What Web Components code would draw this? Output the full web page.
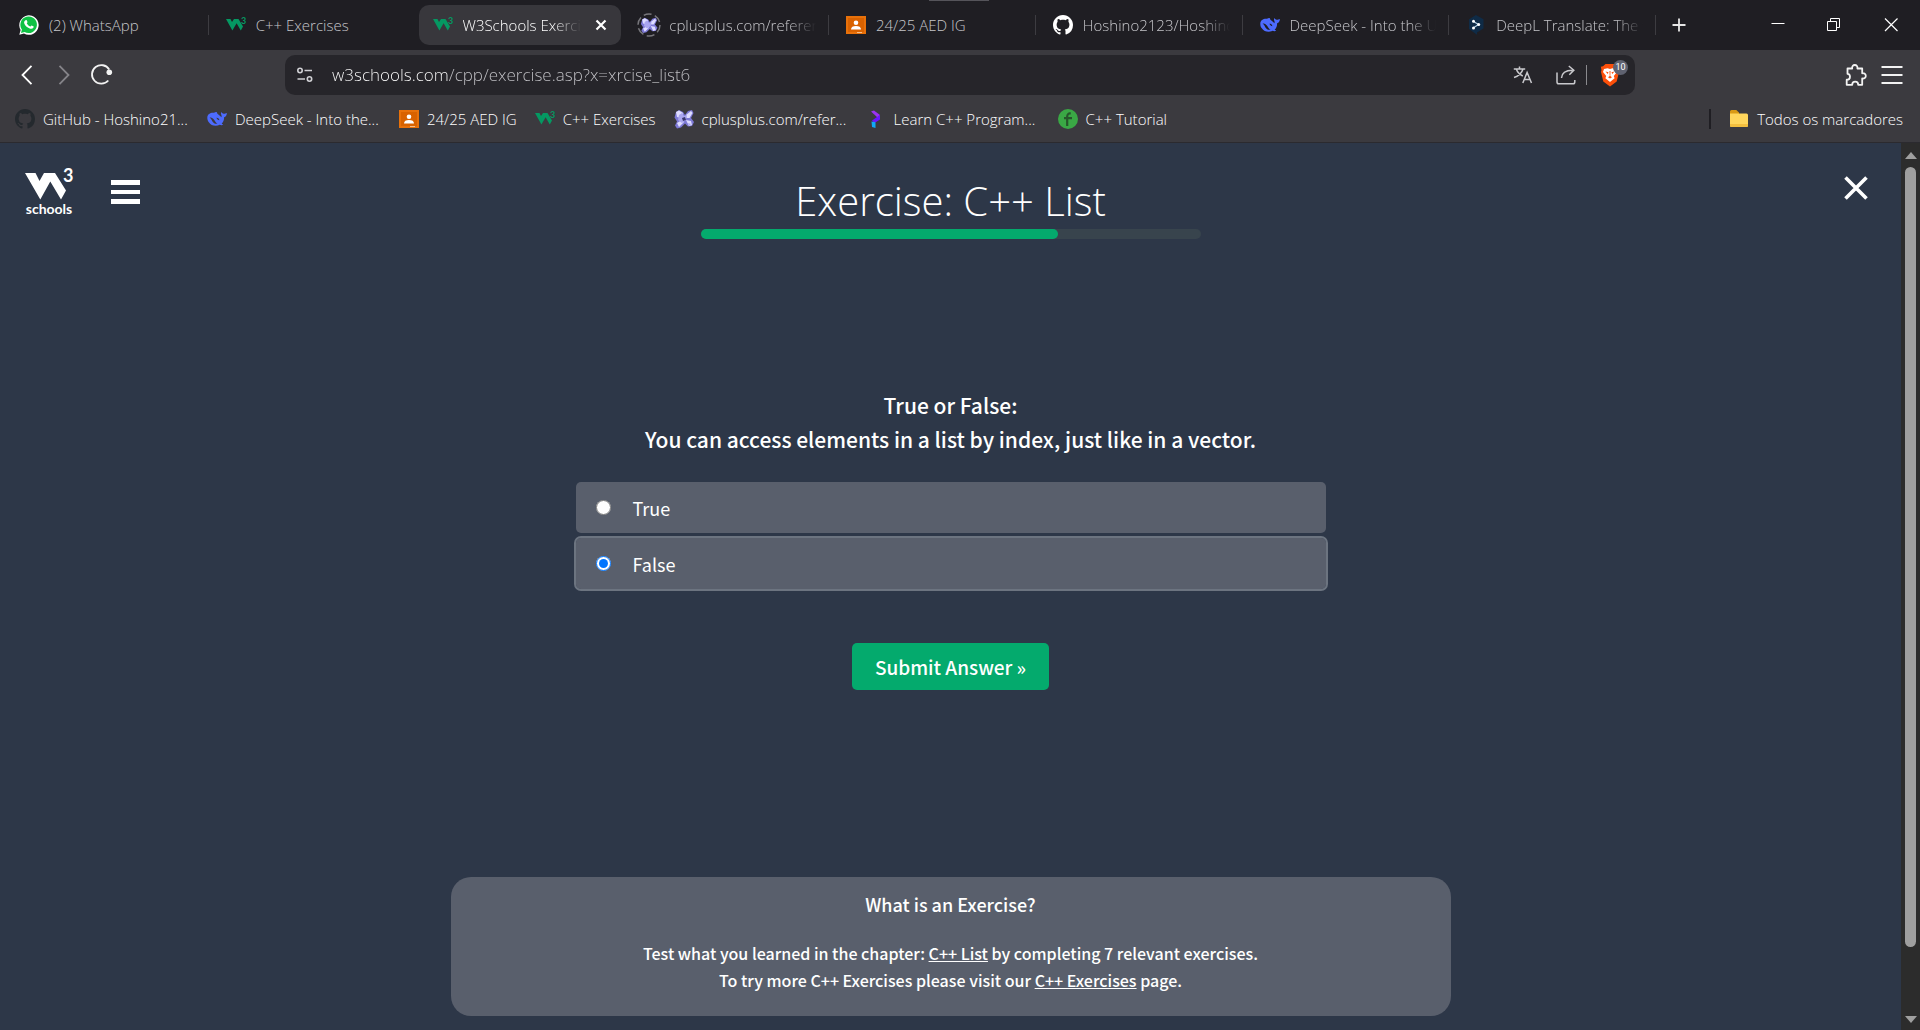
<!DOCTYPE html>
<html lang="pt">
<head>
<meta charset="utf-8">
<title>W3Schools Exercise</title>
<style>
  html, body { margin: 0; height: 100%; background: #2d3748; }
  body { font-family: "Open Sans", "Noto Sans", sans-serif; color: #fff; overflow: hidden; }
</style>
</head>
<body>
<browser-shell></browser-shell>

<script>
const ICONS = {
  whatsapp: `<svg viewBox="0 0 20 20"><path d="M.3 19.700 1.600 15A9.700 9.700 0 1 1 5 18.400z" fill="#fff"/><path d="m2 18 .9-3.400A8.300 8.300 0 1 1 5.600 17z" fill="#0fc144"/><path d="M6.600 5.200c.4-.3 1-.3 1.200.2l.7 1.600c.1.400-.6 1-.7 1.300.7 1.500 1.900 2.600 3.500 3.200.4-.1.900-1.200 1.300-1.100l1.800.9c.4.200.2 1.300-.2 1.700-.8.900-2.100 1-3.500.5-2.700-1-4.700-3-5.500-5.300-.3-1.200.2-2.400 1.400-3z" fill="#fff"/></svg>`,
  w3: `<svg viewBox="0 0 20 20"><path d="M0 4h4.500l1.500 3L8 4h4.500L17 11.500 14.800 15.500 10.600 8.200 6.400 15.500z" fill="#059862"/><text x="15" y="9" font-family="Lato" font-weight="700" font-size="9" fill="#059862">3</text></svg>`,
  cplus: `<svg viewBox="0 0 20 20"><path d="m2 3 3-2 4 2 2 3 3-4 4-1 1.500 3-2.500 5 3 4-2 4-4 .5-3-3-4 4-4 1-2-3 2-4-2.500-4z" fill="#7d79d6"/><path d="m2 3 3-1.500L9 4l-2 5-4-1zm10 3 5-4 1.500 2-3 5h-3zM3 14l5-3 2 2-5 5zm9-3 5 1 1 4-3 1z" fill="#dedcff"/><path d="m5 6 3-2 2 3 3-1-1 5-4 3-4-3zm9 8 3 1-2 2z" fill="#a9a5ee"/><path d="m8 9 3-1 1 3-3 1z" fill="#39366f"/></svg>`,
  cplusload: `<svg viewBox="0 0 24 24"><circle cx="12" cy="12" r="11" fill="none" stroke="#77767b" stroke-width="1.500" stroke-dasharray="8 3.520"/><g transform="translate(3.500 4) scale(.85 .82)"><path d="m2 3 3-2 4 2 2 3 3-4 4-1 1.500 3-2.500 5 3 4-2 4-4 .5-3-3-4 4-4 1-2-3 2-4-2.500-4z" fill="#7d79d6"/><path d="m2 3 3-1.500L9 4l-2 5-4-1zm10 3 5-4 1.500 2-3 5h-3zM3 14l5-3 2 2-5 5zm9-3 5 1 1 4-3 1z" fill="#dedcff"/><path d="m5 6 3-2 2 3 3-1-1 5-4 3-4-3z" fill="#a9a5ee"/></g></svg>`,
  classroom: `<svg viewBox="0 0 20 20"><path d="M0 1h20v18H0z" fill="#e8710a"/><path d="M2 3h16v14H2z" fill="#d96200"/><circle cx="10" cy="7.800" r="2.300" fill="#fff"/><path d="M5 14.500c0-2.500 2-3.500 5-3.500s5 1 5 3.500z" fill="#fff"/><path d="M11 17h5v1h-5z" fill="#f6c08c"/></svg>`,
  github: `<svg viewBox="0 0 16 16"><path fill="currentColor" d="M8 0C3.580 0 0 3.580 0 8c0 3.540 2.290 6.530 5.470 7.590.4.07.55-.17.55-.38 0-.19-.01-.82-.01-1.490-2.010.37-2.530-.49-2.690-.94-.09-.23-.48-.94-.82-1.130-.28-.15-.68-.52-.01-.53.63-.01 1.080.58 1.230.82.72 1.210 1.870.87 2.330.66.07-.52.28-.87.51-1.070-1.780-.2-3.640-.89-3.640-3.950 0-.87.31-1.590.82-2.150-.08-.2-.36-1.020.08-2.120 0 0 .67-.21 2.200.82.64-.18 1.320-.27 2-.27.68 0 1.360.09 2 .27 1.530-1.040 2.200-.82 2.200-.82.44 1.100.16 1.920.08 2.120.51.56.82 1.270.82 2.150 0 3.070-1.870 3.750-3.650 3.950.29.25.54.73.54 1.480 0 1.070-.01 1.930-.01 2.200 0 .21.15.46.55.38A8.013 8.013 0 0 0 16 8c0-4.420-3.580-8-8-8z"/></svg>`,
  deepseek: `<svg viewBox="0 0 20 20"><path fill="#4d6bfe" fill-rule="evenodd" d="M.3 8.500C.5 5.400 3 3.800 6 3.800c1.600 0 2-1.100 3.400-.8.800.2.500 1.300 1.300 2 1.300 1.200 2.500 1.500 3.600 3.200.7-1 .2-2-.2-3-.3-.9 0-1.600.6-2.100.3 1 1 1.700 2 1.700 1.300 0 2-.5 3.200-.9-.1 2.400-1 3.800-2.800 4.400.1 3-1 5-2.500 6.400l1.600.9c-.9.900-2.400.8-3.500.2-4 2-8.700.8-10.900-2.600C.8 12 .2 10.400.3 8.500zM2.600 8.600c1.200.8 1.900 2.200 2.700 3.600 1.200 2 3 3 5.300 2.500-1.300-.7-2-1.800-2.800-3C6.500 9.700 5 8.300 2.600 8.600zM9.400 8.800c.6 1.300 1.500 2.200 2.900 2.500.1-1.500-1.200-2.700-2.900-2.500z"/></svg>`,
  deepl: `<svg viewBox="0 0 20 20"><path d="m10 0 7.500 4.200v9.300L11 17.500v2.300L3 14V4.200z" fill="#0f2b46"/><path d="m7.500 6.500 5 3.100-5 3.200" fill="none" stroke="#b5d3e6" stroke-width="1.200"/><circle cx="7.500" cy="6.300" r="1.500" fill="#fff"/><circle cx="12.700" cy="9.600" r="1.500" fill="#fff"/><circle cx="7.500" cy="13" r="1.500" fill="#fff"/></svg>`,
  learn: `<svg viewBox="0 0 20 20"><path d="M5 2.500 8 1.500 14 6l-2.500 2.500z" fill="#9a33f0"/><path d="M14 6v4.500L8.500 14 6 11.500 11 8z" fill="#6a16ff"/><path d="m5.500 12.500 4 .8V19L6 18z" fill="#10a8f5"/></svg>`,
  tutorial: `<svg viewBox="0 0 20 20"><circle cx="10" cy="10" r="10" fill="#3aa845"/><path d="M12.700 4.600c-2-.6-3.500.6-3.500 3V17M6 9.200h8" fill="none" stroke="#26562b" stroke-width="2.200"/></svg>`,
  folder: `<svg viewBox="0 0 20 20"><path d="M1 2.500A1.500 1.500 0 0 1 2.500 1h4.800L10 3.500v3H1z" fill="#d99a15"/><path d="M1 4.500h16.500A1.500 1.500 0 0 1 19 6v10.500a1.500 1.500 0 0 1-1.500 1.500h-15A1.500 1.500 0 0 1 1 16.500z" fill="#ffd65c"/><path d="M1 15h18v1.500a1.500 1.500 0 0 1-1.500 1.500h-15A1.500 1.500 0 0 1 1 16.500z" fill="#f3bf3f"/></svg>`,
  close: `<svg viewBox="0 0 20 20"><path d="m5.500 5.500 9 9m0-9-9 9" stroke="currentColor" stroke-width="2.200" fill="none"/></svg>`,
  plus: `<svg viewBox="0 0 20 20"><path d="M10 3.500v13M3.500 10h13" stroke="#e6e6e6" stroke-width="1.800"/></svg>`,
  minimize: `<svg viewBox="0 0 20 20"><path d="M3.500 8.500h13" stroke="#fff"/></svg>`,
  restore: `<svg viewBox="0 0 20 20"><path d="M2.500 6.500h9v9h-9zM5.500 6.500v-3h9v9h-3" fill="none" stroke="#fff"/></svg>`,
  winclose: `<svg viewBox="0 0 20 20"><path d="m3 3.500 12.500 12.500M15.500 3.500 3 16" stroke="#fff" stroke-width="1.200"/></svg>`,
  back: `<svg viewBox="0 0 20 20"><path d="M14.500.8 5.500 10l9 9.200" fill="none" stroke="currentColor" stroke-width="1.800"/></svg>`,
  forward: `<svg viewBox="0 0 20 20"><path d="m5.500.8 9 9.200-9 9.200" fill="none" stroke="currentColor" stroke-width="1.800"/></svg>`,
  reload: `<svg viewBox="0 0 22 22"><path d="M17.300 16.500A9.300 9.300 0 1 1 18.200 5.500" fill="none" stroke="#f2f2f2" stroke-width="1.800"/><circle cx="18.300" cy="8.300" r="2.800" fill="#f2f2f2"/></svg>`,
  site: `<svg viewBox="0 0 20 20"><g fill="none" stroke="#d0d0d4" stroke-width="1.600"><circle cx="5" cy="5.500" r="2.200"/><path d="M9.500 5.500H17M2.500 14H10"/><circle cx="14.500" cy="14" r="2.200"/></g></svg>`,
  translate: `<svg viewBox="0 0 20 20"><path d="M.8 4h11.400M6.500 1.500V4M3.300 4c1 3 3.500 5.500 6.500 7M10 4C9 7.500 5.500 11 1 12.500M9.800 18l4.300-10.500L18.500 18M11.300 14.500H17" fill="none" stroke="#c9c9cd" stroke-width="1.500"/></svg>`,
  share: `<svg viewBox="0 0 20 20"><path d="M1 7.500V17a1.800 1.800 0 0 0 1.800 1.800H17a1.800 1.800 0 0 0 1.800-1.800v-2M5.500 13c.3-5 3.500-7.800 11-7.800M12.800 1l5 4.200-4.500 4.500" fill="none" stroke="#c9c9cd" stroke-width="1.500"/></svg>`,
  brave: `<svg viewBox="0 0 20 24"><path d="M5.500 1h9L17 3.300l2.200.5L18.500 7l.5 2-2.300 9.500L10 23.500 3.300 18.500 1 9l.5-2L.8 3.800 3 3.300z" fill="#fb4f0a"/><path d="m4 6 3.500-.8L10 6l2.500-.8L16 6l1 3-3.200 4 .8 2.200L10 19l-4.600-3.800.8-2.200L3 9z" fill="#fff"/><path d="m5.500 8.500 3 .8-.7 1.700zm9 0-3 .8.700 1.700zM9.500 8h1l-.2 5 1.700 1.300-2 1.200-2-1.200L9.700 13z" fill="#fb4f0a"/></svg>`,
  puzzle: `<svg viewBox="0 0 22 22"><path d="M2.500 4.500H7.200C6.800 2.500 8 1 9.800 1s3 1.500 2.600 3.500h4.800v4.800c2-.4 3.600.8 3.600 2.600s-1.600 3-3.600 2.600V20.800h-4c0-2-1.400-3.200-3-3.200s-3 1.200-3 3.200H1.700v-5.100c2 0 3.300-1.300 3.300-3s-1.200-2.900-2.500-2.900z" fill="none" stroke="#f2f2f2" stroke-width="1.800" stroke-linejoin="round"/></svg>`,
  menu: `<svg viewBox="0 0 22 22"><path d="M.5 3h21M.5 11h21M.5 19h21" stroke="#f2f2f2" stroke-width="1.800"/></svg>`,
  burger: `<svg viewBox="0 0 30 30"><path d="M0 3h29v5H0zM0 13h29v4H0zM0 22h29v5H0z" fill="#fff"/></svg>`,
  leave: `<svg viewBox="0 0 26 26"><path d="m2.500 2.500 21 21m0-21-21 21" stroke="#fff" stroke-width="3.600"/></svg>`
};

const define = (name, html, extra) => {
  const tpl = document.createElement('template');
  tpl.innerHTML = html;
  customElements.define(name, class extends HTMLElement {
    constructor() {
      super();
      this.attachShadow({ mode: 'open' }).append(tpl.content.cloneNode(true));
    }
    connectedCallback() { if (extra) extra(this, this.shadowRoot); }
  });
};

customElements.define('ui-icon', class extends HTMLElement {
  constructor() { super(); this.attachShadow({ mode: 'open' }); }
  connectedCallback() {
    this.shadowRoot.innerHTML = `<style>
      :host { display: block; flex: none; width: var(--size, 20px); height: var(--size, 20px); }
      svg { display: block; width: 100%; height: 100%; overflow: visible; }
    </style>${ICONS[this.getAttribute('name')] || ''}`;
  }
});

define('browser-tab', `
  <style>
    :host { display: flex; flex: 1; min-width: 0; align-items: center; box-sizing: border-box; padding: 5px 1px 5px 3px; color: #c6c6ca; background: linear-gradient(#3d3c41, #3d3c41) right center / 1px 20px no-repeat; }
    :host([active]), :host([before-active]) { background: none; }
    :host([active]) { color: #fff; }
    button { all: unset; flex: 1; min-width: 0; height: 40px; display: flex; align-items: center; gap: 10px; padding: 0 12px 0 14px; border-radius: 10px; box-sizing: border-box; }
    :host([active]) button { background: #38373c; }
    :host([loading]) button { gap: 8px; padding-left: 12px; }
    span { flex: 1; min-width: 0; overflow: hidden; white-space: nowrap; font: 300 15px/20px "Open Sans", sans-serif; }
    :host([fade]) span { -webkit-mask-image: linear-gradient(90deg, #000 calc(100% - 28px), transparent); mask-image: linear-gradient(90deg, #000 calc(100% - 28px), transparent); }
    ui-icon.x { display: none; margin: 0 -2px 0 0; }
    :host([active]) ui-icon.x { display: block; }
  </style>
  <button type="button" role="tab"><slot name="icon"></slot><span><slot></slot></span><ui-icon class="x" name="close"></ui-icon></button>`);

define('tab-strip', `
  <style>
    :host { display: flex; height: 50px; background: #1f1e23; position: relative; }
    :host::before { content: ""; position: absolute; top: 0; left: calc(50% - 31px); width: 60px; height: 1px; background: #55545a; }
    .tabs { display: flex; flex: 0 1 1654px; min-width: 0; margin-left: 2px; }
    .add, .win button { all: unset; display: grid; place-items: center; }
    .add { width: 46px; }
    .win { display: flex; margin-left: auto; }
    .win button { width: 57px; }
  </style>
  <div class="tabs" role="tablist"><slot></slot></div>
  <button class="add" type="button" aria-label="Nova aba"><ui-icon name="plus"></ui-icon></button>
  <div class="win">
    <button type="button" aria-label="Minimizar"><ui-icon name="minimize"></ui-icon></button>
    <button type="button" aria-label="Restaurar"><ui-icon name="restore"></ui-icon></button>
    <button type="button" aria-label="Fechar"><ui-icon name="winclose"></ui-icon></button>
  </div>`);

define('nav-bar', `
  <style>
    :host { display: flex; align-items: center; height: 50px; background: #3b3a3f; box-sizing: border-box; padding: 0 17px; }
    button { all: unset; display: block; }
    .left { display: flex; gap: 17px; flex: 0 0 268px; }
    .address { flex: 0 1 1350px; min-width: 0; display: flex; align-items: center; height: 40px; border-radius: 10px; background: #26252a; box-sizing: border-box; padding: 0 13px 0 10px; }
    input { all: unset; flex: 1; min-width: 0; margin-left: 17px; font: 300 17px/24px "Open Sans", sans-serif; color: transparent; background: linear-gradient(90deg, #fff 116px, #c6c6ca 116px); -webkit-background-clip: text; background-clip: text; }
    .share { margin: 0 10px 0 23px; }
    .bar { width: 1px; height: 20px; background: #8a8a8e; margin-right: 11px; }
    .shield { position: relative; --size: 24px; }
    .badge { position: absolute; left: 15px; top: -3px; width: 15px; height: 15px; border-radius: 8px; background: #5f6270; font: 400 9px/15px Roboto, sans-serif; text-align: center; }
    .right { display: flex; gap: 14px; margin-left: auto; --size: 22px; }
  </style>
  <div class="left">
    <button type="button" aria-label="Voltar"><ui-icon name="back" style="color:#fff"></ui-icon></button>
    <button type="button" aria-label="Avançar"><ui-icon name="forward" style="color:#858489"></ui-icon></button>
    <button type="button" aria-label="Recarregar" style="--size:22px"><ui-icon name="reload"></ui-icon></button>
  </div>
  <div class="address">
    <ui-icon name="site"></ui-icon>
    <input type="text" aria-label="Endereço" value="w3schools.com/cpp/exercise.asp?x=xrcise_list6">
    <button type="button" aria-label="Traduzir"><ui-icon name="translate"></ui-icon></button>
    <button class="share" type="button" aria-label="Compartilhar"><ui-icon name="share"></ui-icon></button>
    <div class="bar"></div>
    <button class="shield" type="button" aria-label="Brave Shields"><ui-icon name="brave"></ui-icon><span class="badge">10</span></button>
  </div>
  <div class="right">
    <button type="button" aria-label="Extensões"><ui-icon name="puzzle"></ui-icon></button>
    <button type="button" aria-label="Menu"><ui-icon name="menu"></ui-icon></button>
  </div>`);

define('bookmark-item', `
  <style>
    :host { display: block; }
    :host([long]) { width: 174px; }
    a { display: flex; align-items: center; gap: 8px; color: #fff; text-decoration: none; font: 300 15px/20px "Open Sans", sans-serif; white-space: nowrap; }
  </style>
  <a href="#"><slot name="icon"></slot><slot></slot></a>`);

define('bookmarks-bar', `
  <style>
    :host { display: flex; align-items: center; gap: 18px; height: 43px; box-sizing: border-box; padding: 0 17px 5px 15px; background: #3b3a3f; border-bottom: 1px solid #2b2a2f; }
    .bar { width: 2px; height: 20px; margin-left: auto; background: #1f1e23; }
  </style>
  <slot></slot><div class="bar"></div><slot name="all"></slot>`);

define('page-scrollbar', `
  <style>
    :host { display: flex; flex-direction: column; align-items: center; justify-content: space-between; flex: 0 0 19px; background: #2c2c2c; box-sizing: border-box; padding: 9px 0 7px; }
    .thumb { flex: 0 1 780px; width: 11px; border-radius: 6px; background: #9f9f9f; margin: 8px 0 auto; }
    .up, .down { border: 6px solid transparent; border-top: 0; border-bottom: 7px solid #9f9f9f; }
    .down { border-bottom: 0; border-top: 7px solid #9f9f9f; }
  </style>
  <div class="up"></div><div class="thumb"></div><div class="down"></div>`);

define('w3-logo', `
  <style>
    :host { display: block; width: 48px; }
    a { display: flex; flex-direction: column; align-items: center; gap: 1px; color: #fff; text-decoration: none; }
    svg { display: block; width: 48px; height: 32px; overflow: visible; }
    span { font: 700 14px/14px Lato, sans-serif; }
  </style>
  <a href="#"><svg viewBox="0 0 48 32" fill="#fff"><path d="M0 4h10.500l4 8L19 4h11l11 17.500L36 30.500 25.300 12.500 15.300 30.500z"/><text x="38" y="13" font-family="Lato" font-weight="700" font-size="18">3</text></svg><span>schools</span></a>`);

define('exercise-progress', `
  <style>
    :host { display: block; width: 500px; height: 10px; border-radius: 5px; background: #38444d; }
    div { height: 100%; border-radius: 5px; background: #04aa6d; }
  </style>
  <div role="progressbar" aria-label="Progresso"></div>`,
  (el, root) => {
    root.querySelector('div').style.width = `calc(100% * ${el.getAttribute('done')} / ${el.getAttribute('total')})`;
  });

define('exercise-header', `
  <style>
    :host { display: grid; grid-template-columns: 1fr auto 1fr; align-items: start; padding: 26px 32px 0 25px; }
    .left { display: flex; gap: 38px; --size: 30px; }
    button { all: unset; display: block; }
    .left button { margin-top: 8px; height: 30px; }
    .mid { display: flex; flex-direction: column; align-items: center; margin-right: -7px; }
    h1 { margin: 2px 0 -2px; font: 300 40px/60px "Open Sans", sans-serif; }
    .close { justify-self: end; --size: 26px; margin-top: 6px; }
  </style>
  <div class="left"><w3-logo></w3-logo><button type="button" aria-label="Menu"><ui-icon name="burger"></ui-icon></button></div>
  <div class="mid"><h1><slot></slot></h1><exercise-progress done="5" total="7"></exercise-progress></div>
  <button class="close" type="button" aria-label="Close"><ui-icon name="leave"></ui-icon></button>`);

define('exercise-quiz', `
  <style>
    :host { display: block; width: 750px; max-width: 100%; margin: 149px auto 0; font-family: "Noto Sans CJK SC", sans-serif; }
    form { display: flex; flex-direction: column; align-items: center; }
    .q { margin: 0; font-size: 21px; font-weight: 500; line-height: 34px; text-align: center; }
    .options { align-self: stretch; display: flex; flex-direction: column; gap: 5px; margin: 26px 0 54px; }
    label { display: flex; align-items: center; gap: 22px; height: 51px; padding: 0 20px; border-radius: 5px; background: #595f6c; font-size: 18px; line-height: 28px; }
    label:has(:checked) { outline: 2px solid #6c7480; }
    input { width: 15px; height: 15px; margin: 0; }
    button { all: unset; height: 47px; padding: 0 23px; border-radius: 5px; background: #04aa6d; font-size: 19px; font-weight: 500; line-height: 46px; }
  </style>
  <form>
    <p class="q"><slot></slot></p>
    <div class="options">
      <label><input type="radio" name="answer" value="true">True</label>
      <label><input type="radio" name="answer" value="false" checked>False</label>
    </div>
    <button type="button">Submit Answer »</button>
  </form>`);

define('info-card', `
  <style>
    :host { display: block; box-sizing: border-box; width: 1000px; max-width: 100%; margin: auto auto 14px; padding: 12px 20px 22px; border-radius: 20px; background: #595f6c; text-align: center; font: 500 16px/27px "Noto Sans CJK SC", sans-serif; }
    h2 { margin: 0 0 21px; font-size: 18px; font-weight: 500; line-height: 30px; }
    p { margin: 0; }
    ::slotted(a) { color: #fff; }
  </style>
  <h2><slot name="title"></slot></h2><p><slot></slot></p>`);

define('browser-shell', `
  <style>
    :host { display: flex; flex-direction: column; height: 100vh; }
    .view { flex: 1; min-height: 0; display: flex; background: #2d3748; }
    main { flex: 1; min-width: 0; display: flex; flex-direction: column; overflow: hidden; }
    a { color: #fff; }
  </style>
  <tab-strip>
    <browser-tab><ui-icon slot="icon" name="whatsapp"></ui-icon>(2) WhatsApp</browser-tab>
    <browser-tab before-active><ui-icon slot="icon" name="w3"></ui-icon>C++ Exercises</browser-tab>
    <browser-tab active fade><ui-icon slot="icon" name="w3"></ui-icon>W3Schools Exercise</browser-tab>
    <browser-tab fade loading><ui-icon slot="icon" name="cplusload" style="--size:24px"></ui-icon>cplusplus.com/reference</browser-tab>
    <browser-tab><ui-icon slot="icon" name="classroom"></ui-icon>24/25 AED IG</browser-tab>
    <browser-tab fade><ui-icon slot="icon" name="github" style="color:#fff"></ui-icon>Hoshino2123/Hoshino2123</browser-tab>
    <browser-tab fade><ui-icon slot="icon" name="deepseek"></ui-icon>DeepSeek - Into the Unknown</browser-tab>
    <browser-tab fade><ui-icon slot="icon" name="deepl"></ui-icon>DeepL Translate: The world</browser-tab>
  </tab-strip>
  <nav-bar></nav-bar>
  <bookmarks-bar>
    <bookmark-item long><ui-icon slot="icon" name="github" style="color:#24292e"></ui-icon>GitHub - Hoshino21...</bookmark-item>
    <bookmark-item long><ui-icon slot="icon" name="deepseek"></ui-icon>DeepSeek - Into the...</bookmark-item>
    <bookmark-item><ui-icon slot="icon" name="classroom"></ui-icon>24/25 AED IG</bookmark-item>
    <bookmark-item><ui-icon slot="icon" name="w3"></ui-icon>C++ Exercises</bookmark-item>
    <bookmark-item long><ui-icon slot="icon" name="cplus"></ui-icon>cplusplus.com/refer...</bookmark-item>
    <bookmark-item long><ui-icon slot="icon" name="learn"></ui-icon>Learn C++ Program...</bookmark-item>
    <bookmark-item><ui-icon slot="icon" name="tutorial"></ui-icon>C++ Tutorial</bookmark-item>
    <bookmark-item slot="all"><ui-icon slot="icon" name="folder"></ui-icon>Todos os marcadores</bookmark-item>
  </bookmarks-bar>
  <div class="view">
    <main>
      <exercise-header>Exercise: C++ List</exercise-header>
      <exercise-quiz>True or False:<br>You can access elements in a list by index, just like in a vector.</exercise-quiz>
      <info-card><span slot="title">What is an Exercise?</span>Test what you learned in the chapter: <a href="#">C++ List</a> by completing 7 relevant exercises.<br>To try more C++ Exercises please visit our <a href="#">C++ Exercises</a> page.</info-card>
    </main>
    <page-scrollbar></page-scrollbar>
  </div>`);
</script>
</body>
</html>
